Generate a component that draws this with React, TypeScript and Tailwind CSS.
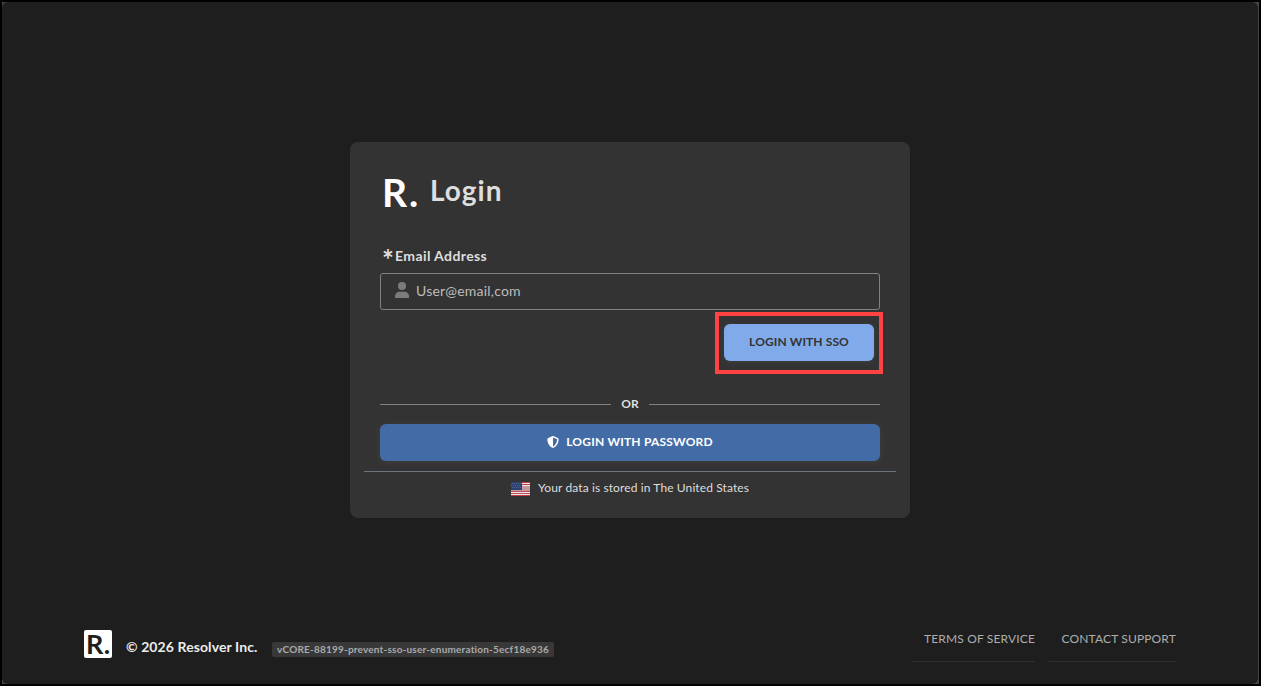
import React from 'react';

const VERSION = 'vCORE-88199-prevent-sso-user-enumeration-5ecf18e936';

const UserIcon = () => (
  <svg width="14" height="16" viewBox="0 0 14 16" fill="currentColor" className="mb-[3px] shrink-0">
    <circle cx="7" cy="4" r="4" />
    <path d="M0 16v-1.500C0 11.700 2.100 9.700 4.600 9.700h4.800c2.500 0 4.600 2 4.600 4.800V16z" />
  </svg>
);

const ShieldIcon = () => (
  <svg width="12" height="12" viewBox="0 0 512 512" fill="currentColor" className="shrink-0">
    <path d="M256 0c4.600 0 9.200 1 13.400 2.900L457.800 82.800c22 9.300 38.400 31 38.300 57.200c-.5 99.200-41.300 280.700-213.600 363.200c-16.700 8-36.100 8-52.800 0C57.300 420.700 16.500 239.200 16 140c-.1-26.200 16.300-47.900 38.300-57.200L242.700 2.900C246.800 1 251.400 0 256 0zm0 66.800V444.800C394 378 431.100 230.100 432 141.400L256 66.800z" />
  </svg>
);

const FlagIcon = () => (
  <svg width="19" height="14" viewBox="0 0 19 14" className="shrink-0">
    <rect width="19" height="14" fill="#c29a9e" />
    <path d="M11 .5h8M11 2.500h8M0 13.500h19" stroke="#c23b45" />
    <path d="M11 1.500h8M11 3.500h8M0 10.500h19M0 12.500h19" stroke="#efe3e4" />
    <path d="M0 9.500h19M0 11.500h19" stroke="#b9525c" />
    <rect width="11" height="8" fill="#2e4272" />
    <path d="M1 1.500h10M0 3.500h10M1 5.500h10" stroke="#53648c" strokeDasharray="1 1" />
  </svg>
);

const Divider = () => <span className="h-px w-[231px] bg-[#818181]" />;

const LoginCard: React.FC = () => (
  <div className="h-[376px] w-[560px] rounded-lg bg-[#333333] px-[30px] pt-[30px]">
    <div className="flex h-10">
      <span className="w-[50px] pl-0.5 text-[39px] leading-10 font-bold tracking-[2px] text-white">R.</span>
      <h1 className="text-[28px] leading-[37px] font-bold tracking-[1px] text-[#dedede]">Login</h1>
    </div>

    <label className="mt-[34px] flex h-[27px] pl-0.5 text-[14px] leading-5 font-bold tracking-[0.4px] text-[#dedede]">
      <span className="w-[13px] text-[28px] leading-[27px]">*</span>
      Email Address
    </label>
    <div className="flex h-[37px] items-center rounded-[3px] border border-[#818181] pl-3.5 text-[#7c7c7c]">
      <UserIcon />
      <span className="mb-0.5 ml-[7px] text-[14px] leading-5 tracking-[0.2px] text-[#bdbdbd]">User@email,com</span>
    </div>

    <div className="mt-0.5 -mr-[3px] ml-auto h-[62px] w-[168px] border-4 border-[#ff4343] px-[5px] pt-2">
      <button className="h-[37px] w-[150px] rounded-md bg-[#80aaea] pb-0.5 text-[12px] leading-[35px] font-bold tracking-[0.1px] text-[#333333] shadow-[0_1px_5px_#414141]">
        LOGIN WITH SSO
      </button>
    </div>

    <div className="mt-5 flex h-[21px] items-center justify-between text-[12px] font-bold text-[#dedede]">
      <Divider />
      <span className="pb-0.5">OR</span>
      <Divider />
    </div>

    <button className="mt-[9px] flex h-[37px] w-full items-center justify-center gap-[7px] rounded-md bg-[#436ca6] pb-px text-[12px] font-bold tracking-[0.2px] text-white shadow-[0_1px_6px_#414141]">
      <ShieldIcon />
      LOGIN WITH PASSWORD
    </button>

    <div className="-mx-4 mt-2.5 flex h-[35px] items-center border-t border-[#6d747b] pl-[147px]">
      <FlagIcon />
      <span className="mb-0.5 ml-2 text-[12px] tracking-[0.11px] text-[#dedede]">Your data is stored in The United States</span>
    </div>
  </div>
);

const Footer: React.FC = () => (
  <footer className="mt-auto flex h-[54px] w-full justify-between px-[82px]">
    <div className="flex">
      <span className="h-7 w-7 rounded-[2px] bg-white pl-0.5 text-[27px] leading-[27px] font-bold tracking-[0.5px] text-[#1e1e1e]">R.</span>
      <span className="mt-[7px] ml-3.5 w-[146px] text-[14px] leading-5 font-bold tracking-[0.1px] whitespace-nowrap text-[#ececec]">© 2026 Resolver Inc.</span>
      <span className="mt-3 h-[15px] w-[282px] rounded-[2px] bg-[#383838] text-center text-[10px] leading-[14px] font-bold tracking-[0.2px] whitespace-nowrap text-[#aaaaaa]">{VERSION}</span>
    </div>
    <nav className="flex gap-3.5 text-[12px] leading-[18px] tracking-[0.15px] text-[#aeaeae]">
      <a className="h-8 w-[123px] border-b border-[#303030] text-right whitespace-nowrap">TERMS OF SERVICE</a>
      <a className="h-8 w-[127px] border-b border-[#303030] text-right whitespace-nowrap">CONTACT SUPPORT</a>
    </nav>
  </footer>
);

export default function App() {
  return (
    <div className="h-[686px] w-[1261px] border-2 border-black bg-[#444444] pr-px font-['Lato','Open_Sans',sans-serif]">
      <main className="flex h-full flex-col items-center rounded-md bg-[#1e1e1e] pt-[140px]">
        <LoginCard />
        <Footer />
      </main>
    </div>
  );
}
